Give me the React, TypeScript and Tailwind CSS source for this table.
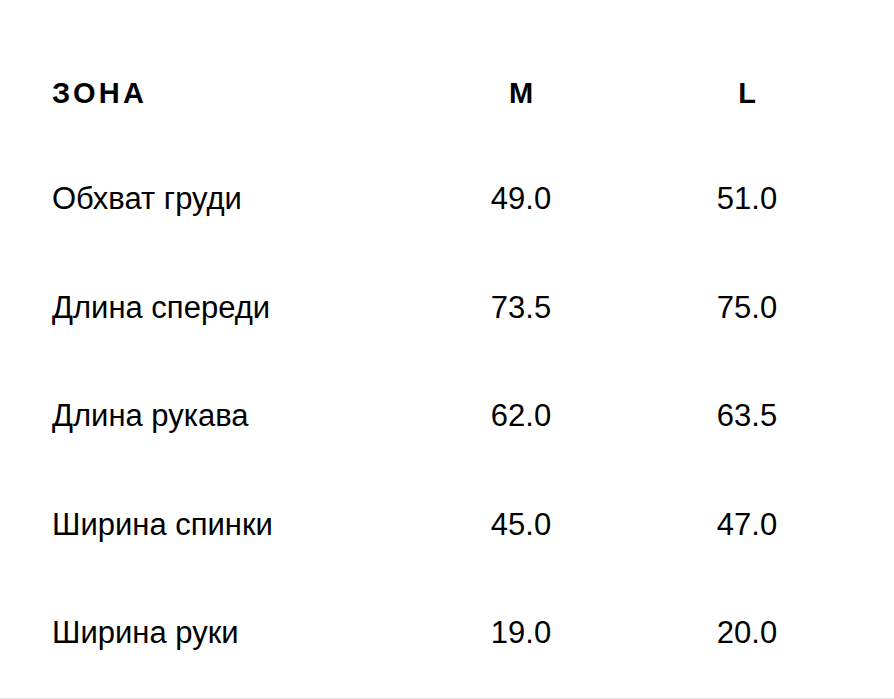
import React from "react";

const rows: [string, string, string][] = [
  ["Обхват груди", "49.0", "51.0"],
  ["Длина спереди", "73.5", "75.0"],
  ["Длина рукава", "62.0", "63.5"],
  ["Ширина спинки", "45.0", "47.0"],
  ["Ширина руки", "19.0", "20.0"],
];

export default function App() {
  return (
    <div
      className="w-[894px] h-[699px] bg-white text-black overflow-hidden"
      style={{ fontFamily: '"Liberation Sans", Arial, sans-serif' }}
    >
      <div className="pt-[41px] pl-[52px]">
        <div className="grid grid-cols-[356px_226px_226px] h-[104px] items-center text-[29px] font-bold leading-[32px]">
          <div className="tracking-[3.2px]">ЗОНА</div>
          <div className="text-center">M</div>
          <div className="text-center">L</div>
        </div>
        {rows.map((r) => (
          <div
            key={r[0]}
            className="grid grid-cols-[356px_226px_226px] h-[108.5px] items-center text-[31px] leading-[34px]"
          >
            <div>{r[0]}</div>
            <div className="text-center">{r[1]}</div>
            <div className="text-center">{r[2]}</div>
          </div>
        ))}
      </div>
      <div className="mt-[10px] h-px bg-[#e4e4e4]" />
    </div>
  );
}
